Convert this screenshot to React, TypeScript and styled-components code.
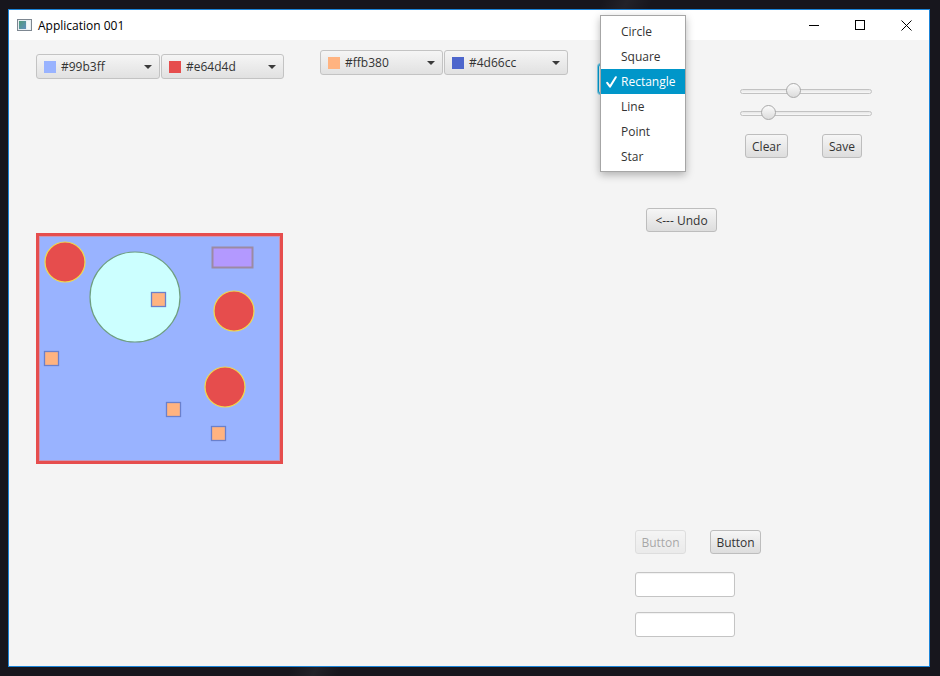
import React from "react";
import styled, { createGlobalStyle } from "styled-components";

const Global = createGlobalStyle`
  html, body { margin: 0; padding: 0; }
  body {
    background: #17161d;
    width: 940px;
    height: 676px;
    overflow: hidden;
    font-family: "Open Sans", "Noto Sans", sans-serif;
  }
`;

const Desktop = styled.div`
  width: 940px;
  height: 676px;
  padding: 9px 0 0 8px;
  box-sizing: border-box;
  background:
    linear-gradient(115deg, transparent 48%, rgba(255,255,255,0.05) 50%, transparent 52%),
    #17161d;
`;

const Window = styled.div`
  position: relative;
  width: 922px;
  height: 658px;
  box-sizing: border-box;
  border: 1px solid #1b84d8;
  display: flex;
  flex-direction: column;
  font-size: 12px;
  color: #333;
`;

const TitleBar = styled.div`
  height: 30px;
  background: #ffffff;
  display: flex;
  align-items: center;
  padding-left: 8px;
  color: #000;
`;

const TitleText = styled.span`
  margin-left: 6px;
  font-size: 12px;
  flex: 1;
`;

const WinButton = styled.div`
  width: 46px;
  height: 30px;
  display: flex;
  align-items: center;
  justify-content: center;
`;

const Content = styled.div`
  flex: 1;
  background: #f4f4f4;
  display: flex;
`;

const LeftColumn = styled.div`
  width: 588px;
  display: flex;
  flex-direction: column;
  padding-left: 27px;
  box-sizing: border-box;
`;

const PickerRow = styled.div`
  display: flex;
  align-items: flex-start;
`;

const PickerGroup = styled.div<{ $top: number; $left: number }>`
  display: flex;
  gap: 1px;
  margin-top: ${(p) => p.$top}px;
  margin-left: ${(p) => p.$left}px;
`;

const Picker = styled.div<{ $w: number }>`
  width: ${(p) => p.$w}px;
  height: 25px;
  box-sizing: border-box;
  border: 1px solid #c3c3c3;
  border-radius: 3px;
  background: linear-gradient(to bottom, #f5f5f5, #e1e1e1);
  display: flex;
  align-items: center;
  padding: 0 7px 0 7px;
  gap: 5px;
  color: #333;
`;

const Swatch = styled.span<{ $c: string }>`
  width: 12px;
  height: 12px;
  background: ${(p) => p.$c};
  flex: none;
`;

const PickerLabel = styled.span`
  flex: 1;
  font-size: 12px;
`;

const Arrow = styled.span`
  width: 0;
  height: 0;
  border-left: 4px solid transparent;
  border-right: 4px solid transparent;
  border-top: 4px solid #3a3a3a;
`;

const CanvasBox = styled.div`
  margin-top: 154px;
  width: 247px;
  height: 231px;
  display: flex;
`;

const RightColumn = styled.div`
  flex: 1;
  display: flex;
  flex-direction: column;
`;

const TopRight = styled.div`
  display: flex;
  align-items: flex-start;
`;

const Combo = styled.div`
  margin-top: 24px;
  margin-left: 1px;
  width: 87px;
  height: 30px;
  box-sizing: border-box;
  border-radius: 3px;
  border: 1px solid #039ed3;
  box-shadow: 0 0 0 1px #7fcfea;
  background: #f0f0f0;
`;

const SliderPanel = styled.div`
  margin-left: 55px;
  margin-top: 44px;
  width: 132px;
  display: flex;
  flex-direction: column;
  gap: 8px;
`;

const SliderWrap = styled.div`
  position: relative;
  height: 14px;
  display: flex;
  align-items: center;
`;

const Track = styled.div`
  width: 100%;
  height: 5px;
  box-sizing: border-box;
  border: 1px solid #c2c2c2;
  border-radius: 3px;
  background: linear-gradient(to bottom, #e6e6e6, #f8f8f8);
`;

const Thumb = styled.div`
  position: absolute;
  top: -1px;
  width: 15px;
  height: 15px;
  box-sizing: border-box;
  border-radius: 50%;
  border: 1px solid #a9a9a9;
  background: linear-gradient(to bottom, #fbfbfb, #dcdcdc);
`;

const ButtonRow = styled.div<{ $gap: number; $left: number }>`
  display: flex;
  gap: ${(p) => p.$gap}px;
  margin-left: ${(p) => p.$left}px;
  margin-top: 6px;
`;

const Button = styled.button<{ $w: number; $disabled?: boolean }>`
  width: ${(p) => p.$w}px;
  height: 24px;
  box-sizing: border-box;
  border: 1px solid #bdbdbd;
  border-radius: 3px;
  background: linear-gradient(to bottom, #f6f6f6, #dddddd);
  font-family: "Open Sans", "Noto Sans", sans-serif;
  font-size: 12px;
  color: #333;
  padding: 0;
  display: flex;
  align-items: center;
  justify-content: center;
  opacity: ${(p) => (p.$disabled ? 0.4 : 1)};
`;

const UndoWrap = styled.div`
  margin-top: 50px;
  margin-left: 49px;
`;

const BottomGroup = styled.div`
  margin-top: 298px;
  margin-left: 38px;
  display: flex;
  flex-direction: column;
`;

const BottomButtons = styled.div`
  display: flex;
  gap: 24px;
`;

const Field = styled.input<{ $top: number }>`
  margin-top: ${(p) => p.$top}px;
  width: 100px;
  height: 25px;
  box-sizing: border-box;
  border: 1px solid #c4c4c4;
  border-radius: 3px;
  background: #fff;
  box-shadow: inset 0 1px 1px rgba(0,0,0,0.06);
  outline: none;
`;

const Popup = styled.div`
  position: absolute;
  left: 591px;
  top: 5px;
  width: 86px;
  box-sizing: border-box;
  border: 1px solid #a6a6a6;
  background: #fff;
  padding: 3px 0 2px 0;
  box-shadow: 0 3px 8px rgba(0,0,0,0.28);
`;

const MenuItem = styled.div<{ $sel?: boolean }>`
  position: relative;
  height: 25px;
  display: flex;
  align-items: center;
  padding-left: 20px;
  font-size: 12px;
  color: ${(p) => (p.$sel ? "#fff" : "#333")};
  background: ${(p) => (p.$sel ? "#0096c9" : "transparent")};
`;

const CheckIcon = styled.svg`
  position: absolute;
  left: 5px;
  top: 7px;
`;

const AppIcon = () => (
  <svg width="15" height="12" viewBox="0 0 15 12">
    <defs>
      <linearGradient id="ig" x1="0" y1="0" x2="1" y2="1">
        <stop offset="0" stopColor="#4f9a7a" />
        <stop offset="1" stopColor="#5f8fbf" />
      </linearGradient>
    </defs>
    <rect x="0.5" y="0.5" width="14" height="11" fill="#e8eef2" stroke="#7d8791" />
    <rect x="2" y="2" width="7" height="8" fill="url(#ig)" />
    <rect x="10" y="2" width="3" height="8" fill="#f4f7f8" />
  </svg>
);

const ShapesCanvas = () => {
  const circles = [
    { cx: 29, cy: 29 },
    { cx: 198, cy: 78 },
    { cx: 189, cy: 154 },
  ];
  const squares = [
    { x: 115.5, y: 59.5 },
    { x: 8.5, y: 118.5 },
    { x: 130.5, y: 169.5 },
    { x: 175.5, y: 193.5 },
  ];
  return (
    <svg width="247" height="231" viewBox="0 0 247 231">
      <rect x="0" y="0" width="247" height="231" fill="#99b3ff" />
      <rect x="1.5" y="1.5" width="244" height="228" fill="none" stroke="#e64d4d" strokeWidth="3" />
      <rect x="3.5" y="3.5" width="240" height="224" fill="none" stroke="#c796b8" strokeWidth="1" />
      {circles.map((c, i) => (
        <circle key={i} cx={c.cx} cy={c.cy} r="20" fill="#e64d4d" stroke="#f2dc4a" strokeWidth="1.2" />
      ))}
      <circle cx="99" cy="64" r="45" fill="#ccffff" stroke="#6f9f80" strokeWidth="1.2" />
      <rect x="176.5" y="14.5" width="40" height="20" fill="#b399ff" stroke="#9c8aa3" strokeWidth="2" />
      {squares.map((s, i) => (
        <rect key={i} x={s.x} y={s.y} width="14" height="14" fill="#ffb380" stroke="#6a80cc" strokeWidth="1.3" />
      ))}
    </svg>
  );
};

const Slider = ({ value }: { value: number }) => (
  <SliderWrap>
    <Track />
    <Thumb style={{ left: `${(value / 100) * 117}px` }} />
  </SliderWrap>
);

export default function App() {
  return (
    <>
      <Global />
      <Desktop>
        <Window>
          <TitleBar>
            <AppIcon />
            <TitleText>Application 001</TitleText>
            <WinButton>
              <svg width="10" height="10" viewBox="0 0 10 10">
                <line x1="0" y1="5.5" x2="10" y2="5.5" stroke="#000" strokeWidth="1" />
              </svg>
            </WinButton>
            <WinButton>
              <svg width="10" height="10" viewBox="0 0 10 10">
                <rect x="0.5" y="0.5" width="9" height="9" fill="none" stroke="#000" strokeWidth="1" />
              </svg>
            </WinButton>
            <WinButton>
              <svg width="11" height="11" viewBox="0 0 11 11">
                <path d="M0.5 0.5 L10.5 10.5 M10.5 0.5 L0.5 10.5" stroke="#000" strokeWidth="1" />
              </svg>
            </WinButton>
          </TitleBar>
          <Content>
            <LeftColumn>
              <PickerRow>
                <PickerGroup $top={14} $left={0}>
                  <Picker $w={124}>
                    <Swatch $c="#99b3ff" />
                    <PickerLabel>#99b3ff</PickerLabel>
                    <Arrow />
                  </Picker>
                  <Picker $w={123}>
                    <Swatch $c="#e64d4d" />
                    <PickerLabel>#e64d4d</PickerLabel>
                    <Arrow />
                  </Picker>
                </PickerGroup>
                <PickerGroup $top={10} $left={36}>
                  <Picker $w={123}>
                    <Swatch $c="#ffb380" />
                    <PickerLabel>#ffb380</PickerLabel>
                    <Arrow />
                  </Picker>
                  <Picker $w={124}>
                    <Swatch $c="#4d66cc" />
                    <PickerLabel>#4d66cc</PickerLabel>
                    <Arrow />
                  </Picker>
                </PickerGroup>
              </PickerRow>
              <CanvasBox>
                <ShapesCanvas />
              </CanvasBox>
            </LeftColumn>
            <RightColumn>
              <TopRight>
                <Combo />
                <SliderPanel>
                  <Slider value={39} />
                  <Slider value={18} />
                  <ButtonRow $gap={34} $left={5}>
                    <Button $w={43}>Clear</Button>
                    <Button $w={40}>Save</Button>
                  </ButtonRow>
                </SliderPanel>
              </TopRight>
              <UndoWrap>
                <Button $w={71}>&lt;--- Undo</Button>
              </UndoWrap>
              <BottomGroup>
                <BottomButtons>
                  <Button $w={51} $disabled>Button</Button>
                  <Button $w={51}>Button</Button>
                </BottomButtons>
                <Field $top={18} />
                <Field $top={15} />
              </BottomGroup>
            </RightColumn>
          </Content>
          <Popup>
            <MenuItem>Circle</MenuItem>
            <MenuItem>Square</MenuItem>
            <MenuItem $sel>
              <CheckIcon width="11" height="12" viewBox="0 0 11 12">
                <path d="M1.2 6.8 L4 10.6 L9.8 1.2" fill="none" stroke="#fff" strokeWidth="2" strokeLinecap="round" strokeLinejoin="round" />
              </CheckIcon>
              Rectangle
            </MenuItem>
            <MenuItem>Line</MenuItem>
            <MenuItem>Point</MenuItem>
            <MenuItem>Star</MenuItem>
          </Popup>
        </Window>
      </Desktop>
    </>
  );
}
